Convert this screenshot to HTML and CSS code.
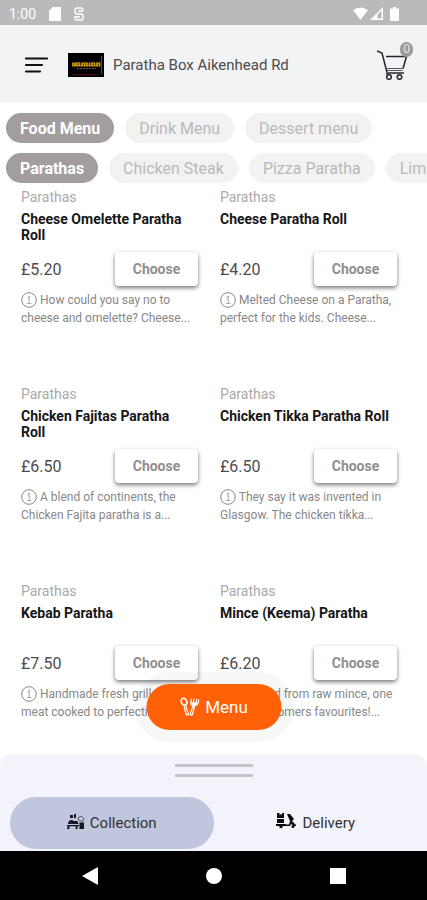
FILE: index.html
```html
<!DOCTYPE html>
<html lang="en">
<head>
<meta charset="utf-8">
<meta name="viewport" content="width=device-width, initial-scale=1">
<title>Paratha Box Aikenhead Rd</title>
<link rel="stylesheet" href="styles.css">
</head>
<body>
<svg class="defs" aria-hidden="true">
  <symbol id="info" viewBox="0 0 16 16"><circle cx="8" cy="8" r="7.3" fill="none" stroke="currentColor"/><path d="M6.5 6.8H8.3V11.3M6 11.5h4.4M7.6 4.2h1.2v1.1H7.6z" fill="none" stroke="currentColor" stroke-width=".7"/></symbol>
</svg>
<div class="app">
  <div class="status">
    <span>1:00</span>
    <svg class="sd" width="12" height="14" viewBox="0 0 12 14"><path d="M4 0h7q1 0 1 1v12q0 1-1 1H1q-1 0-1-1V4z" fill="#fff"/></svg>
    <svg width="10" height="14" viewBox="0 0 10 14"><path d="M9 4V3Q9 1 7 1H3Q1 1 1 3v2q0 2 2 2h4q2 0 2 2v2q0 2-2 2H3q-2 0-2-2V9M4 4h5M1 10h5" fill="none" stroke="#fff" stroke-width="1.4"/></svg>
    <svg class="signals" width="48" height="14" viewBox="0 0 48 14"><path d="M0 3Q7.5-2 15 3L7.5 13z" fill="#fff"/><path d="M30 0v13H17z" fill="#fff"/><path d="M28.5 3.500v8h-4v-4z" fill="#bababa"/><path d="M40 0h3v1.500h3V13q0 1-1 1h-7q-1 0-1-1V1.500h3z" fill="#fff"/></svg>
  </div>

  <header class="header">
    <button class="icon-button" aria-label="Open navigation">
      <svg width="24" height="18" viewBox="0 0 24 18"><path d="M2 2.500h21M2 9h16M2 15.500h14" stroke="#111" stroke-width="2.200" stroke-linecap="round"/></svg>
    </button>
    <svg class="logo" width="36" height="24" viewBox="0 0 36 24"><path fill="#000" d="M0 0h36v24H0z"/><path d="M4 21.500h27" stroke="#4a1210"/><path d="M33.500 3v18" stroke="#6b5208"/><path d="M5 9.500v4M7 9.500v4M9 9.500v4M11.500 9.500v4M14 9.500v4M16.500 9.500v4M19 9.500v4M21.500 9.500v4M24 9.500v4M26.500 9.500v4M29 9.500v4M31.500 9.500v4" stroke="#e2a80d" stroke-width="1.600"/><path d="M5 12.700h27M8 10h4M15 10h4M23 10h3M29 10h3" stroke="#c28e0a"/><path d="M9 15.500h19" stroke="#665a3b" stroke-dasharray="2 1"/></svg>
    <h1>Paratha Box Aikenhead Rd</h1>
    <button class="cart" aria-label="Basket">
      <svg width="34" height="32" viewBox="0 0 34 32"><path d="M0 2l5 2 5 19.500M9 7.500H29.500L26 19.500" fill="none" stroke="#24242e" stroke-width="1.500"/><path d="M9.500 19.500H26M10 21.500h15.500" fill="none" stroke="#55555e"/><path d="M27 24H11q-1.500 0-1.500 1.500" fill="none" stroke="#24242e" stroke-width="1.500"/><circle cx="12" cy="28" r="2.300" fill="none" stroke="#24242e" stroke-width="1.500"/><circle cx="22.500" cy="28" r="2.300" fill="none" stroke="#24242e" stroke-width="1.500"/></svg>
      <span class="badge">0</span>
    </button>
  </header>

  <nav class="tabs" aria-label="Menus">
    <div class="tab-row"><button class="tab active">Food Menu</button><button class="tab">Drink Menu</button><button class="tab">Dessert menu</button></div>
    <div class="tab-row"><button class="tab active">Parathas</button><button class="tab">Chicken Steak</button><button class="tab">Pizza Paratha</button><button class="tab">Limited</button></div>
  </nav>

  <main class="menu">
    <article class="item">
      <p class="category">Parathas</p><h2>Cheese Omelette Paratha Roll</h2>
      <div class="buy"><span class="price">£5.20</span><button class="choose">Choose</button></div>
      <p class="about"><svg class="info"><use href="#info"/></svg> How could you say no to<br>cheese and omelette? Cheese...</p>
    </article>
    <article class="item">
      <p class="category">Parathas</p><h2>Cheese Paratha Roll</h2>
      <div class="buy"><span class="price">£4.20</span><button class="choose">Choose</button></div>
      <p class="about"><svg class="info"><use href="#info"/></svg> Melted Cheese on a Paratha,<br>perfect for the kids. Cheese...</p>
    </article>
    <article class="item">
      <p class="category">Parathas</p><h2>Chicken Fajitas Paratha<br>Roll</h2>
      <div class="buy"><span class="price">£6.50</span><button class="choose">Choose</button></div>
      <p class="about"><svg class="info"><use href="#info"/></svg> A blend of continents, the<br>Chicken Fajita paratha is a...</p>
    </article>
    <article class="item">
      <p class="category">Parathas</p><h2>Chicken Tikka Paratha Roll</h2>
      <div class="buy"><span class="price">£6.50</span><button class="choose">Choose</button></div>
      <p class="about"><svg class="info"><use href="#info"/></svg> They say it was invented in<br>Glasgow. The chicken tikka...</p>
    </article>
    <article class="item">
      <p class="category">Parathas</p><h2>Kebab Paratha</h2>
      <div class="buy"><span class="price">£7.50</span><button class="choose">Choose</button></div>
      <p class="about"><svg class="info"><use href="#info"/></svg> Handmade fresh grilled<br>meat cooked to perfection...</p>
    </article>
    <article class="item">
      <p class="category">Parathas</p><h2>Mince (Keema) Paratha</h2>
      <div class="buy"><span class="price">£6.20</span><button class="choose">Choose</button></div>
      <p class="about"><svg class="info"><use href="#info"/></svg> Created from raw mince, one<br>of our customers favourites!...</p>
    </article>
  </main>

  <section class="sheet" aria-label="Order type">
    <div class="float"><button class="menu-button">
      <svg width="20" height="20" viewBox="0 0 20 20" fill="none" stroke="#fff"><ellipse cx="4.500" cy="4.700" rx="2.700" ry="3.500" transform="rotate(-25 4.500 4.700)" stroke-width="1.600"/><path d="M6 8l3 9.500q-1.500 1.500-2.500-.5L4.500 9" stroke-width="1.200"/><path d="M12 1.500l-.8 5q.5 2.500 3 2.500t4-2l1.500-4.500M14.500 1.500l-.8 5M17.500 2l-1.500 5" stroke-width="1.200"/><path d="M12 5.500l6 .8-3.700 3z" fill="#fff"/><path d="M13.500 9l-2.800 8q.5 2 2.300.5L15 9.500" stroke-width="1.200"/></svg>
      Menu</button></div>
    <div class="handle"></div>
    <div class="modes">
      <button class="mode selected"><svg width="18" height="20" viewBox="0 0 18 20"><path d="M1 11q1-3 3-3t2.500 1h4l1 3H1zM0 13h12v1.200H0zM1 13h1.500v4H0zM9 13h1.500v4H8.500zM3 3h3v3H3zM7 2.500l2-1v4l-2 1zM12.500 10.500H17V17h-4.500z" fill="#17171f"/><path d="M11 6l3-2 3 2.500-1.500 3-4-1.500z" fill="none" stroke="#3b3f4a" stroke-width=".8"/></svg>Collection</button>
      <button class="mode"><svg width="22" height="22" viewBox="0 0 22 22"><path d="M2 2h2.500v2L6 3l1 1V2h2v5H2zM2 8h7v4H2zM1 13h10v2H1zM12 3h3l4 5-2 2 4 4v1h-2l-3-2-1 2h-4v-1.500h3l1-3.500z" fill="#0b0b10"/><circle cx="6" cy="15.500" r="1.700" fill="#0b0b10"/><circle cx="18" cy="15.500" r="1.500" fill="#0b0b10"/></svg>Delivery</button>
    </div>
  </section>

  <footer class="system">
    <button aria-label="Back"><svg width="18" height="20" viewBox="0 0 18 20"><path d="M17 1v18L1 10z" fill="#fff"/></svg></button>
    <button aria-label="Home"><svg width="18" height="20" viewBox="0 0 18 20"><circle cx="9" cy="10" r="8" fill="#fff"/></svg></button>
    <button aria-label="Recents"><svg width="18" height="20" viewBox="0 0 18 20"><path d="M1 2h16v16H1z" fill="#fff"/></svg></button>
  </footer>
</div>
</body>
</html>
```
FILE: styles.css
```css
* { box-sizing: border-box; }
body { margin: 0; font-family: Roboto, sans-serif; background: #fff; color: #111; }
button { border: 0; padding: 0; margin: 0; background: none; font: inherit; color: inherit; }
h1, h2, p { margin: 0; }
svg { flex: none; }
.defs { position: absolute; width: 0; height: 0; }
.app { display: flex; flex-direction: column; height: 100vh; overflow: hidden; }

.status { flex: none; display: flex; align-items: center; gap: 13px; height: 25px; padding: 2px 26px 0 9px; background: #bababa; color: #fff; font-size: 14px; }
.signals { margin-left: auto; }

.header { flex: none; display: flex; align-items: center; height: 77px; padding: 2px 16px 0 24px; background: #f2f3f5; }
.icon-button { display: flex; margin-right: 20px; }
.header h1 { margin-left: 9px; font-size: 15px; font-weight: 400; color: #4c4c4c; }
.cart { position: relative; display: flex; margin-left: auto; }
.badge { position: absolute; top: -7px; right: -2px; width: 13px; height: 15px; border-radius: 7px; background: #9b9b9b; color: #e5e5e5; font-size: 12px; line-height: 15px; text-align: center; }

.tabs { flex: none; display: flex; flex-direction: column; gap: 10px; padding: 11px 0 0 6px; }
.tab-row { display: flex; gap: 11px; overflow: hidden; }
.tab { flex: none; height: 30px; padding: 0 14px; border-radius: 15px; background: #f2f2f2; color: #b9b9b9; font-size: 16px; }
.tab.active { background: #a39d9d; color: #fff; font-weight: 700; }

.menu { flex: 1; min-height: 0; overflow: hidden; display: grid; grid-template-columns: 1fr 1fr; grid-auto-rows: 197px; align-content: start; column-gap: 22px; padding: 5px 30px 0 21px; }
.category { font-size: 14px; line-height: 18px; color: #aaa; }
.item h2 { height: 32px; margin-top: 5px; font-size: 14px; line-height: 16px; font-weight: 700; color: #161616; }
.buy { display: flex; justify-content: space-between; align-items: center; margin-top: 9px; }
.price { font-size: 16px; color: #4c4c4c; }
.choose { width: 83px; height: 34px; border-radius: 4px; background: #fff; box-shadow: 0 2px 4px #0008; color: #8f8f8f; font-size: 14px; font-weight: 700; }
.about { margin-top: 5px; font-size: 12px; line-height: 18px; color: #888; white-space: nowrap; }
.info { width: 16px; height: 16px; vertical-align: -4px; }

.sheet { position: relative; flex: none; height: 97px; padding: 10px 10px 0; border-radius: 12px 12px 0 0; background: #f2f3fb; }
.float { position: absolute; top: -82px; left: 50%; transform: translateX(-50%); padding: 12px; border-radius: 36px; background: #00000008; }
.menu-button { display: flex; align-items: center; justify-content: center; gap: 6px; width: 135px; height: 46px; border-radius: 23px; background: #ff6108; color: #fff; font-size: 17px; }
.handle { width: 78px; height: 13px; margin: 0 auto 20px; border: solid #c4c5c9; border-width: 3px 0; }
.modes { display: grid; grid-template-columns: 1fr 1fr; }
.mode { display: flex; align-items: center; justify-content: center; gap: 5px; height: 52px; border-radius: 26px; color: #333; font-size: 15px; }
.mode svg { margin-bottom: 3px; }
.selected { background: #bfc6dd; }

.system { flex: none; display: flex; justify-content: center; align-items: center; gap: 106px; height: 49px; background: #000; }
.system button { display: flex; }
```
